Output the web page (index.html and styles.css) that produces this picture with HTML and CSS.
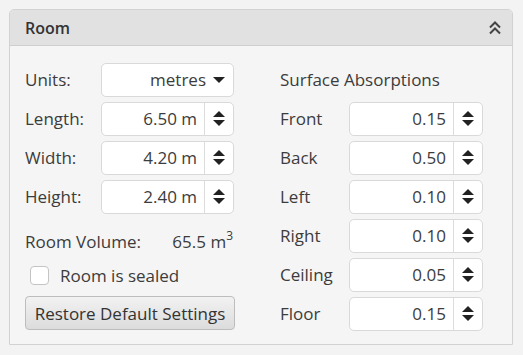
FILE: index.html
```html
<!DOCTYPE html>
<html lang="en">
  <head>
    <meta charset="UTF-8" />
    <title>Room</title>
    <link rel="stylesheet" href="styles.css">
  </head>
  <body>
    <div class="panel">
      <div class="panel-header">
        <span>Room</span>
        <svg class="collapse" width="14" height="16" viewBox="0 0 14 16">
          <path d="M2 7.5 L7 2.5 L12 7.5 M2 13.5 L7 8.5 L12 13.5" fill="none" stroke="#444" stroke-width="2" />
        </svg>
      </div>
      <div class="panel-body">
        <div class="column left">
          <div class="row">
            <label>Units:</label>
            <div class="field combo">
              <span class="value">metres</span>
              <span class="combo-arrow"></span>
            </div>
          </div>
          <div class="row">
            <label>Length:</label>
            <div class="field spinner">
              <span class="value">6.50 m</span>
              <span class="spin"><i class="up"></i><i class="down"></i></span>
            </div>
          </div>
          <div class="row">
            <label>Width:</label>
            <div class="field spinner">
              <span class="value">4.20 m</span>
              <span class="spin"><i class="up"></i><i class="down"></i></span>
            </div>
          </div>
          <div class="row">
            <label>Height:</label>
            <div class="field spinner">
              <span class="value">2.40 m</span>
              <span class="spin"><i class="up"></i><i class="down"></i></span>
            </div>
          </div>
          <div class="volume">
            <span>Room Volume:</span>
            <span class="volume-value">65.5 m<sup>3</sup></span>
          </div>
          <div class="check">
            <span class="box"></span>
            <span>Room is sealed</span>
          </div>
          <button class="restore">Restore Default Settings</button>
        </div>
        <div class="column right">
          <div class="row">
            <span class="heading">Surface Absorptions</span>
          </div>
          <div class="row">
            <label>Front</label>
            <div class="field spinner">
              <span class="value">0.15</span>
              <span class="spin"><i class="up"></i><i class="down"></i></span>
            </div>
          </div>
          <div class="row">
            <label>Back</label>
            <div class="field spinner">
              <span class="value">0.50</span>
              <span class="spin"><i class="up"></i><i class="down"></i></span>
            </div>
          </div>
          <div class="row">
            <label>Left</label>
            <div class="field spinner">
              <span class="value">0.10</span>
              <span class="spin"><i class="up"></i><i class="down"></i></span>
            </div>
          </div>
          <div class="row">
            <label>Right</label>
            <div class="field spinner">
              <span class="value">0.10</span>
              <span class="spin"><i class="up"></i><i class="down"></i></span>
            </div>
          </div>
          <div class="row">
            <label>Ceiling</label>
            <div class="field spinner">
              <span class="value">0.05</span>
              <span class="spin"><i class="up"></i><i class="down"></i></span>
            </div>
          </div>
          <div class="row">
            <label>Floor</label>
            <div class="field spinner">
              <span class="value">0.15</span>
              <span class="spin"><i class="up"></i><i class="down"></i></span>
            </div>
          </div>
        </div>
      </div>
    </div>
  </body>
</html>
```
FILE: styles.css
```css
/* Room settings panel */
body {
  font-family: "Open Sans", "Lato", sans-serif;
  font-size: 17px;
  background-color: #f3f3f3;
  margin: 0;
  padding: 9px;
  color: #3c3c3c;
}

.panel {
  width: 504px;
  border: 1px solid #d2d2d2;
  border-radius: 5px 5px 0 0;
  background-color: #f5f5f5;
  box-sizing: border-box;
}

.panel-header {
  display: flex;
  align-items: center;
  justify-content: space-between;
  height: 35px;
  padding: 0 10px 0 15px;
  background-color: #e1e1e1;
  border-bottom: 1px solid #cfcfcf;
  border-radius: 4px 4px 0 0;
  font-size: 16px;
  font-weight: 600;
  color: #333;
}

.panel-body {
  display: flex;
  padding: 16px 29px 14px 15px;
  gap: 45px;
}

.column {
  display: flex;
  flex-direction: column;
  gap: 5px;
}

.column.left {
  width: 210px;
}

.column.right {
  flex: 1;
}

.row {
  display: flex;
  align-items: center;
  height: 34px;
  padding-top: 1px;
  box-sizing: border-box;
}

.left label {
  width: 76px;
}

.right label {
  width: 69px;
}

.field {
  display: flex;
  align-items: center;
  height: 34px;
  background-color: #fff;
  border: 1px solid #d9d9d9;
  border-radius: 5px;
  box-sizing: border-box;
}

.left .field {
  width: 133px;
}

.right .field {
  width: 134px;
}

.value {
  flex: 1;
  text-align: right;
  padding-right: 7px;
}

.combo-arrow {
  width: 0;
  height: 0;
  margin-right: 8px;
  border-left: 6px solid transparent;
  border-right: 6px solid transparent;
  border-top: 6px solid #222;
}

.spin {
  display: flex;
  flex-direction: column;
  align-items: center;
  justify-content: center;
  gap: 3px;
  width: 28px;
  height: 100%;
  border-left: 1px solid #dcdcdc;
}

.spin i {
  width: 0;
  height: 0;
  border-left: 6px solid transparent;
  border-right: 6px solid transparent;
}

.spin .up {
  border-bottom: 6px solid #222;
}

.spin .down {
  border-top: 6px solid #222;
}

.volume {
  display: flex;
  justify-content: space-between;
  align-items: center;
  width: 208px;
  height: 20px;
  margin-top: 13px;
}

.volume sup {
  font-size: 12px;
  vertical-align: 8px;
  line-height: 0;
}

.check {
  display: flex;
  align-items: center;
  gap: 11px;
  height: 20px;
  margin-top: 9px;
  padding-left: 5px;
}

.box {
  width: 19px;
  height: 19px;
  background-color: #fff;
  border: 1px solid #c4c4c4;
  border-radius: 4px;
  box-sizing: border-box;
}

.restore {
  width: 210px;
  height: 34px;
  margin-top: 6px;
  padding: 0;
  font-family: inherit;
  font-size: 17px;
  color: #333;
  border: 1px solid #bdbdbd;
  border-radius: 4px;
  background: linear-gradient(#f2f2f2, #dcdcdc);
}
```
